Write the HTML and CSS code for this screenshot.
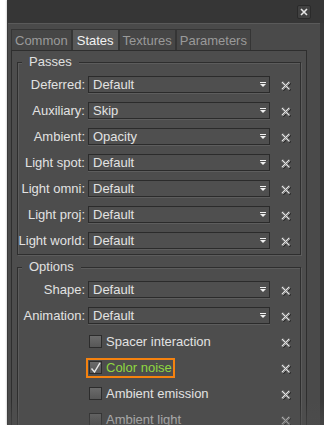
FILE: index.html
```html
<!DOCTYPE html>
<html>
<head>
<meta charset="utf-8">
<link rel="stylesheet" href="styles.css">
</head>
<body>
<div class="window">
  <div class="titlebar">
    <span class="close"><svg width="8" height="8" viewBox="0 0 8 8"><path d="M1 1L7 7M7 1L1 7" stroke="#e6e6e6" stroke-width="1.6"/></svg></span>
  </div>
  <div class="content">
    <div class="tabs">
      <span class="tab">Common</span><span class="tab active">States</span><span class="tab">Textures</span><span class="tab">Parameters</span>
    </div>
    <div class="panel">
      <div class="group">
        <div class="legend">Passes</div>
        <div class="row"><span class="label">Deferred:</span><div class="select"><span>Default</span><svg class="arrow" width="6" height="5"><use href="#arr"/></svg></div><svg class="del" width="10" height="10"><use href="#del"/></svg></div>
        <div class="row"><span class="label">Auxiliary:</span><div class="select"><span>Skip</span><svg class="arrow" width="6" height="5"><use href="#arr"/></svg></div><svg class="del" width="10" height="10"><use href="#del"/></svg></div>
        <div class="row"><span class="label">Ambient:</span><div class="select"><span>Opacity</span><svg class="arrow" width="6" height="5"><use href="#arr"/></svg></div><svg class="del" width="10" height="10"><use href="#del"/></svg></div>
        <div class="row"><span class="label">Light spot:</span><div class="select"><span>Default</span><svg class="arrow" width="6" height="5"><use href="#arr"/></svg></div><svg class="del" width="10" height="10"><use href="#del"/></svg></div>
        <div class="row"><span class="label">Light omni:</span><div class="select"><span>Default</span><svg class="arrow" width="6" height="5"><use href="#arr"/></svg></div><svg class="del" width="10" height="10"><use href="#del"/></svg></div>
        <div class="row"><span class="label">Light proj:</span><div class="select"><span>Default</span><svg class="arrow" width="6" height="5"><use href="#arr"/></svg></div><svg class="del" width="10" height="10"><use href="#del"/></svg></div>
        <div class="row"><span class="label">Light world:</span><div class="select"><span>Default</span><svg class="arrow" width="6" height="5"><use href="#arr"/></svg></div><svg class="del" width="10" height="10"><use href="#del"/></svg></div>
      </div>
      <div class="group group2">
        <div class="legend">Options</div>
        <div class="row"><span class="label">Shape:</span><div class="select"><span>Default</span><svg class="arrow" width="6" height="5"><use href="#arr"/></svg></div><svg class="del" width="10" height="10"><use href="#del"/></svg></div>
        <div class="row"><span class="label">Animation:</span><div class="select"><span>Default</span><svg class="arrow" width="6" height="5"><use href="#arr"/></svg></div><svg class="del" width="10" height="10"><use href="#del"/></svg></div>
        <div class="row"><span></span><div class="check"><span class="box"></span><span class="ctext">Spacer interaction</span></div><svg class="del" width="10" height="10"><use href="#del"/></svg></div>
        <div class="row"><span></span><div class="check focus"><span class="box"><svg width="11" height="11" viewBox="0 0 11 11"><path d="M1.5 6.5L4.5 10L10 0.8" fill="none" stroke="#e8e8e8" stroke-width="1.4"/></svg></span><span class="ctext on">Color noise</span></div><svg class="del" width="10" height="10"><use href="#del"/></svg></div>
        <div class="row"><span></span><div class="check"><span class="box"></span><span class="ctext">Ambient emission</span></div><svg class="del" width="10" height="10"><use href="#del"/></svg></div>
        <div class="row last"><span></span><div class="check"><span class="box"></span><span class="ctext">Ambient light</span></div><svg class="del" width="10" height="10"><use href="#del"/></svg></div>
      </div>
    </div>
  </div>
  <div class="fade"></div>
</div>
<svg class="defs" width="0" height="0">
  <defs>
    <pattern id="dith" width="2" height="2" patternUnits="userSpaceOnUse">
      <rect width="2" height="2" fill="#8e8e8e"/>
      <rect width="1" height="1" fill="#e4e4e4"/>
      <rect x="1" y="1" width="1" height="1" fill="#e4e4e4"/>
    </pattern>
    <g id="del">
      <path d="M2 2L9.5 9.5M9.5 2L2 9.5" stroke="#2a2a2a" stroke-width="2"/>
      <path d="M1 1L8.5 8.5M8.5 1L1 8.5" stroke="url(#dith)" stroke-width="2.2"/>
    </g>
    <g id="arr">
      <rect x="0" y="0" width="6" height="1" fill="#f0f0f0"/>
      <polygon points="0,2 6,2 3,5" fill="#f0f0f0"/>
    </g>
  </defs>
</svg>
</body>
</html>
```

FILE: styles.css
```css
html, body {
  margin: 0;
  padding: 0;
  background: #ffffff;
}
body {
  font-family: "Liberation Sans", Arial, sans-serif;
  font-size: 13px;
  color: #e2e2e2;
}
.window {
  position: relative;
  margin-left: 7px;
  width: 317px;
  height: 425px;
  overflow: hidden;
  background: #393939;
  box-shadow: 0 0 2px rgba(0, 0, 0, 0.35);
}
.titlebar {
  height: 23px;
  background: #363636;
  display: flex;
  justify-content: flex-end;
  align-items: flex-start;
  padding: 5px 13px 0 0;
  box-sizing: border-box;
}
.close {
  width: 14px;
  height: 14px;
  box-sizing: border-box;
  background: #414141;
  border: 1px solid #2a2a2a;
  border-radius: 2px;
  display: flex;
  align-items: center;
  justify-content: center;
}
.content {
  margin: 0 4px 0 1px;
  height: 402px;
  background: #4a4a4a;
  border-top: 1px solid #5a5a5a;
  box-sizing: border-box;
  padding: 5px 0 0 3px;
}
.tabs {
  display: flex;
  height: 21px;
}
.tab {
  height: 21px;
  box-sizing: border-box;
  border: 1px solid #353535;
  border-bottom: none;
  background: #464646;
  color: #9a9a9a;
  padding: 0 3px;
  line-height: 21px;
}
.tab.active {
  background: #585858;
  color: #f2f2f2;
  padding: 0 4px;
}
.panel {
  width: 296px;
  height: 400px;
  box-sizing: border-box;
  border: 1px solid #2e2e2e;
  background: #4d4d4d;
  padding: 11px 5px 0 5px;
}
.group {
  width: 284px;
  box-sizing: border-box;
  border: 1px solid #2e2e2e;
  box-shadow: inset 1px 1px 0 #5c5c5c, 1px 1px 0 #5c5c5c;
}
.group2 {
  margin-top: 12px;
}
.legend {
  width: fit-content;
  height: 16px;
  line-height: 16px;
  margin: -9px 0 2px 4px;
  padding: 0 7px;
  background: #4d4d4d;
  color: #e0e0e0;
}
.row {
  display: grid;
  grid-template-columns: 70px 193px 10px;
  height: 26px;
  align-items: start;
}
.row.last {
  height: 18px;
}
.label {
  margin-top: 4px;
  line-height: 17px;
  text-align: right;
  padding-right: 3px;
  white-space: nowrap;
}
.select {
  margin-top: 4px;
  width: 182px;
  height: 17px;
  box-sizing: border-box;
  border: 1px solid #2b2b2b;
  background: #4f4f4f;
  box-shadow: 0 1px 0 #5d5d5d;
  display: flex;
  align-items: center;
  justify-content: space-between;
  padding: 0 3px 0 4px;
  line-height: 15px;
}
.arrow {
  display: block;
}
.del {
  display: block;
  margin-top: 9px;
}
.check {
  margin: 3px 0 0 -2px;
  height: 20px;
  box-sizing: border-box;
  border: 2px solid transparent;
  padding: 1px 1px 1px 1px;
  display: flex;
  align-items: flex-start;
  width: fit-content;
}
.check.focus {
  border-color: #f5820f;
}
.box {
  width: 13px;
  height: 13px;
  box-sizing: border-box;
  border: 1px solid #2c2c2c;
  background: linear-gradient(#6b6b6b, #575757);
  display: flex;
  align-items: center;
  justify-content: center;
}
.box svg {
  display: block;
}
.ctext {
  margin-left: 4px;
  line-height: 14px;
  white-space: nowrap;
}
.ctext.on {
  color: #8fd840;
}
.fade {
  position: absolute;
  left: 0;
  right: 0;
  bottom: 0;
  height: 24px;
  background: linear-gradient(rgba(77, 77, 77, 0), rgba(77, 77, 77, 0.55));
}
.defs {
  display: block;
  width: 0;
  height: 0;
  overflow: hidden;
}
```
